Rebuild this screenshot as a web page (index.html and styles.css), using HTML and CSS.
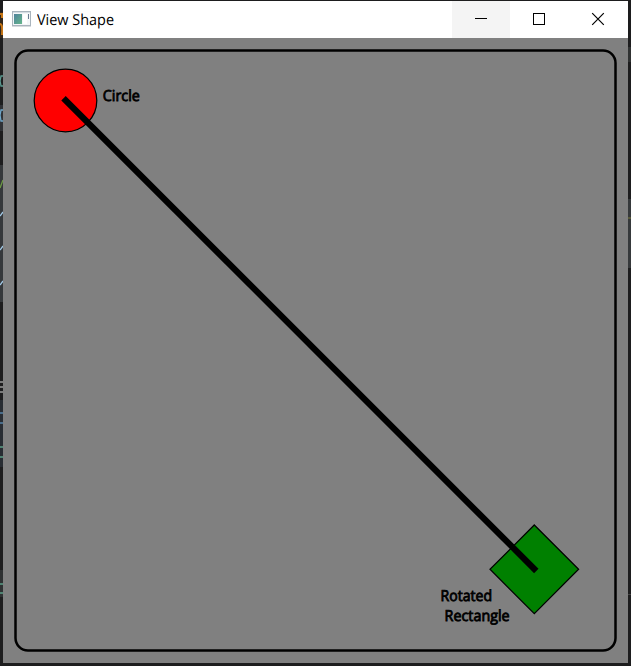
FILE: index.html
```
<!DOCTYPE html>
<html lang="en">
<head>
<meta charset="utf-8">
<title>View Shape</title>
<link rel="stylesheet" href="styles.css">
</head>
<body>
<svg class="backdrop" width="631" height="666" viewBox="0 0 631 666" aria-hidden="true">
  <rect width="631" height="666" fill="#1d1d1e"/>
  <rect y="165" width="3" height="137" fill="#35383b"/>
  <rect y="12" width="3" height="26" fill="#33271a"/>
  <rect y="105" width="3" height="26" fill="#303236"/>
  <rect y="400" width="3" height="67" fill="#282d33"/>
  <rect y="570" width="3" height="27" fill="#2e3132"/>
  <rect x="628" y="47" width="3" height="15" fill="#303232"/>
  <rect x="628" y="199" width="3" height="69" fill="#36393b"/>
  <rect x="628" y="594" width="3" height="1" fill="#444"/>
  <g fill="none" stroke-width="1.3">
    <path d="M0 14h2v4M0 24q3 0 2 11" stroke="#c77616" stroke-width="2"/>
    <path d="M3 76H1l-1 5 1 5h2" stroke="#5b9a91"/>
    <path d="M3 110H1l-1 5 1 6h2" stroke="#6fa6c8"/>
    <path d="M0 188l3-8" stroke="#6d9b45"/>
    <path d="M0 216l3-4M0 250l3-4M0 285l3-4" stroke="#9fc6e3"/>
    <path d="M0 382h3M0 387h3M0 392h3" stroke="#999"/>
    <path d="M0 413h3M0 423h3" stroke="#5683a8"/>
    <path d="M0 447h3M0 457h3M0 584h3M0 593h3" stroke="#5c9f88"/>
    <path d="M628 218h3" stroke="#6b6c3c"/>
  </g>
</svg>
<main class="window">
  <header class="titlebar">
    <svg class="app-icon" width="19" height="16" viewBox="0 0 19 16">
      <defs><linearGradient id="pane" x2="1" y2="1"><stop stop-color="#4f829c"/><stop offset="1" stop-color="#65b68b"/></linearGradient></defs>
      <rect x=".5" y=".5" width="18" height="14" fill="#f4f6f8" stroke="#a9b4bd"/>
      <path d="M1 1.5h17" stroke="#d5dde3"/>
      <rect x="2" y="3" width="8" height="10" fill="url(#pane)"/>
      <rect x="11" y="3" width="4" height="10" fill="#fff"/>
      <path d="M16.5 3v5" stroke="#6b7c91"/>
      <path d="M0 15.5h19" stroke="#d7dadd"/>
    </svg>
    <svg class="title" width="90" height="37"><text x="0" y="24" textLength="77" lengthAdjust="spacingAndGlyphs">View Shape</text></svg>
    <div class="controls">
      <button class="control active" aria-label="Minimize"><svg width="58" height="37"><path d="M23 17.5h12"/></svg></button>
      <button class="control" aria-label="Maximize"><svg width="58" height="37"><path d="M23.5 12.5h11v11h-11z"/></svg></button>
      <button class="control" aria-label="Close"><svg width="60" height="37"><path class="smooth" d="M24.2 12.2l11.6 11.6m0-11.6L24.2 23.8"/></svg></button>
    </div>
  </header>
  <svg class="canvas" width="625" height="625" viewBox="3 38 625 625">
    <rect class="frame" x="15.5" y="50.5" width="600" height="600" rx="12.5"/>
    <circle class="circle" cx="65.5" cy="100.5" r="31.3"/>
    <path class="diamond" d="M534.3 525L578.6 569.3L534.3 613.6L490 569.3z"/>
    <path class="connector" d="M63.5 98.2L536.3 571"/>
    <g class="label">
      <text x="102.8" y="100.8" textLength="37" lengthAdjust="spacingAndGlyphs">Circle</text>
      <text x="440.6" y="600.8" textLength="51.5" lengthAdjust="spacingAndGlyphs">Rotated</text>
      <text x="444.6" y="620.8" textLength="65" lengthAdjust="spacingAndGlyphs">Rectangle</text>
    </g>
  </svg>
</main>
</body>
</html>
```
FILE: styles.css
```
body {
  margin: 0;
  width: 631px;
  height: 666px;
  overflow: hidden;
  background: #1d1d1e;
  font-family: "Open Sans", "Noto Sans", sans-serif;
}
svg { display: block; }
.backdrop { position: absolute; inset: 0; }
.window {
  position: relative;
  width: 625px;
  height: 662px;
  margin: 1px 3px 3px;
  background: #808080;
}
.titlebar {
  display: flex;
  height: 37px;
  background: #fff;
}
.app-icon { margin: 10px 6px 0 9px; }
.title {
  font-size: 15px;
  fill: #000;
  text-rendering: geometricPrecision;
}
.controls { display: flex; margin-left: auto; }
.control {
  padding: 0;
  border: 0;
  background: transparent;
}
.control.active { background: #f4f4f4; }
.control path {
  fill: none;
  stroke: #000;
  stroke-width: 1;
  shape-rendering: crispEdges;
}
.control .smooth { shape-rendering: auto; stroke-width: 1.2; }
.frame { fill: none; stroke: #000; stroke-width: 2.5; }
.circle { fill: #f00; stroke: #000; stroke-width: 1.25; }
.diamond { fill: #008000; stroke: #000; stroke-width: 1.25; }
.connector { stroke: #000; stroke-width: 6.25; }
.label {
  font-size: 15.2px;
  fill: #000;
  stroke: #000;
  stroke-width: 0.85;
  text-rendering: geometricPrecision;
}
```
